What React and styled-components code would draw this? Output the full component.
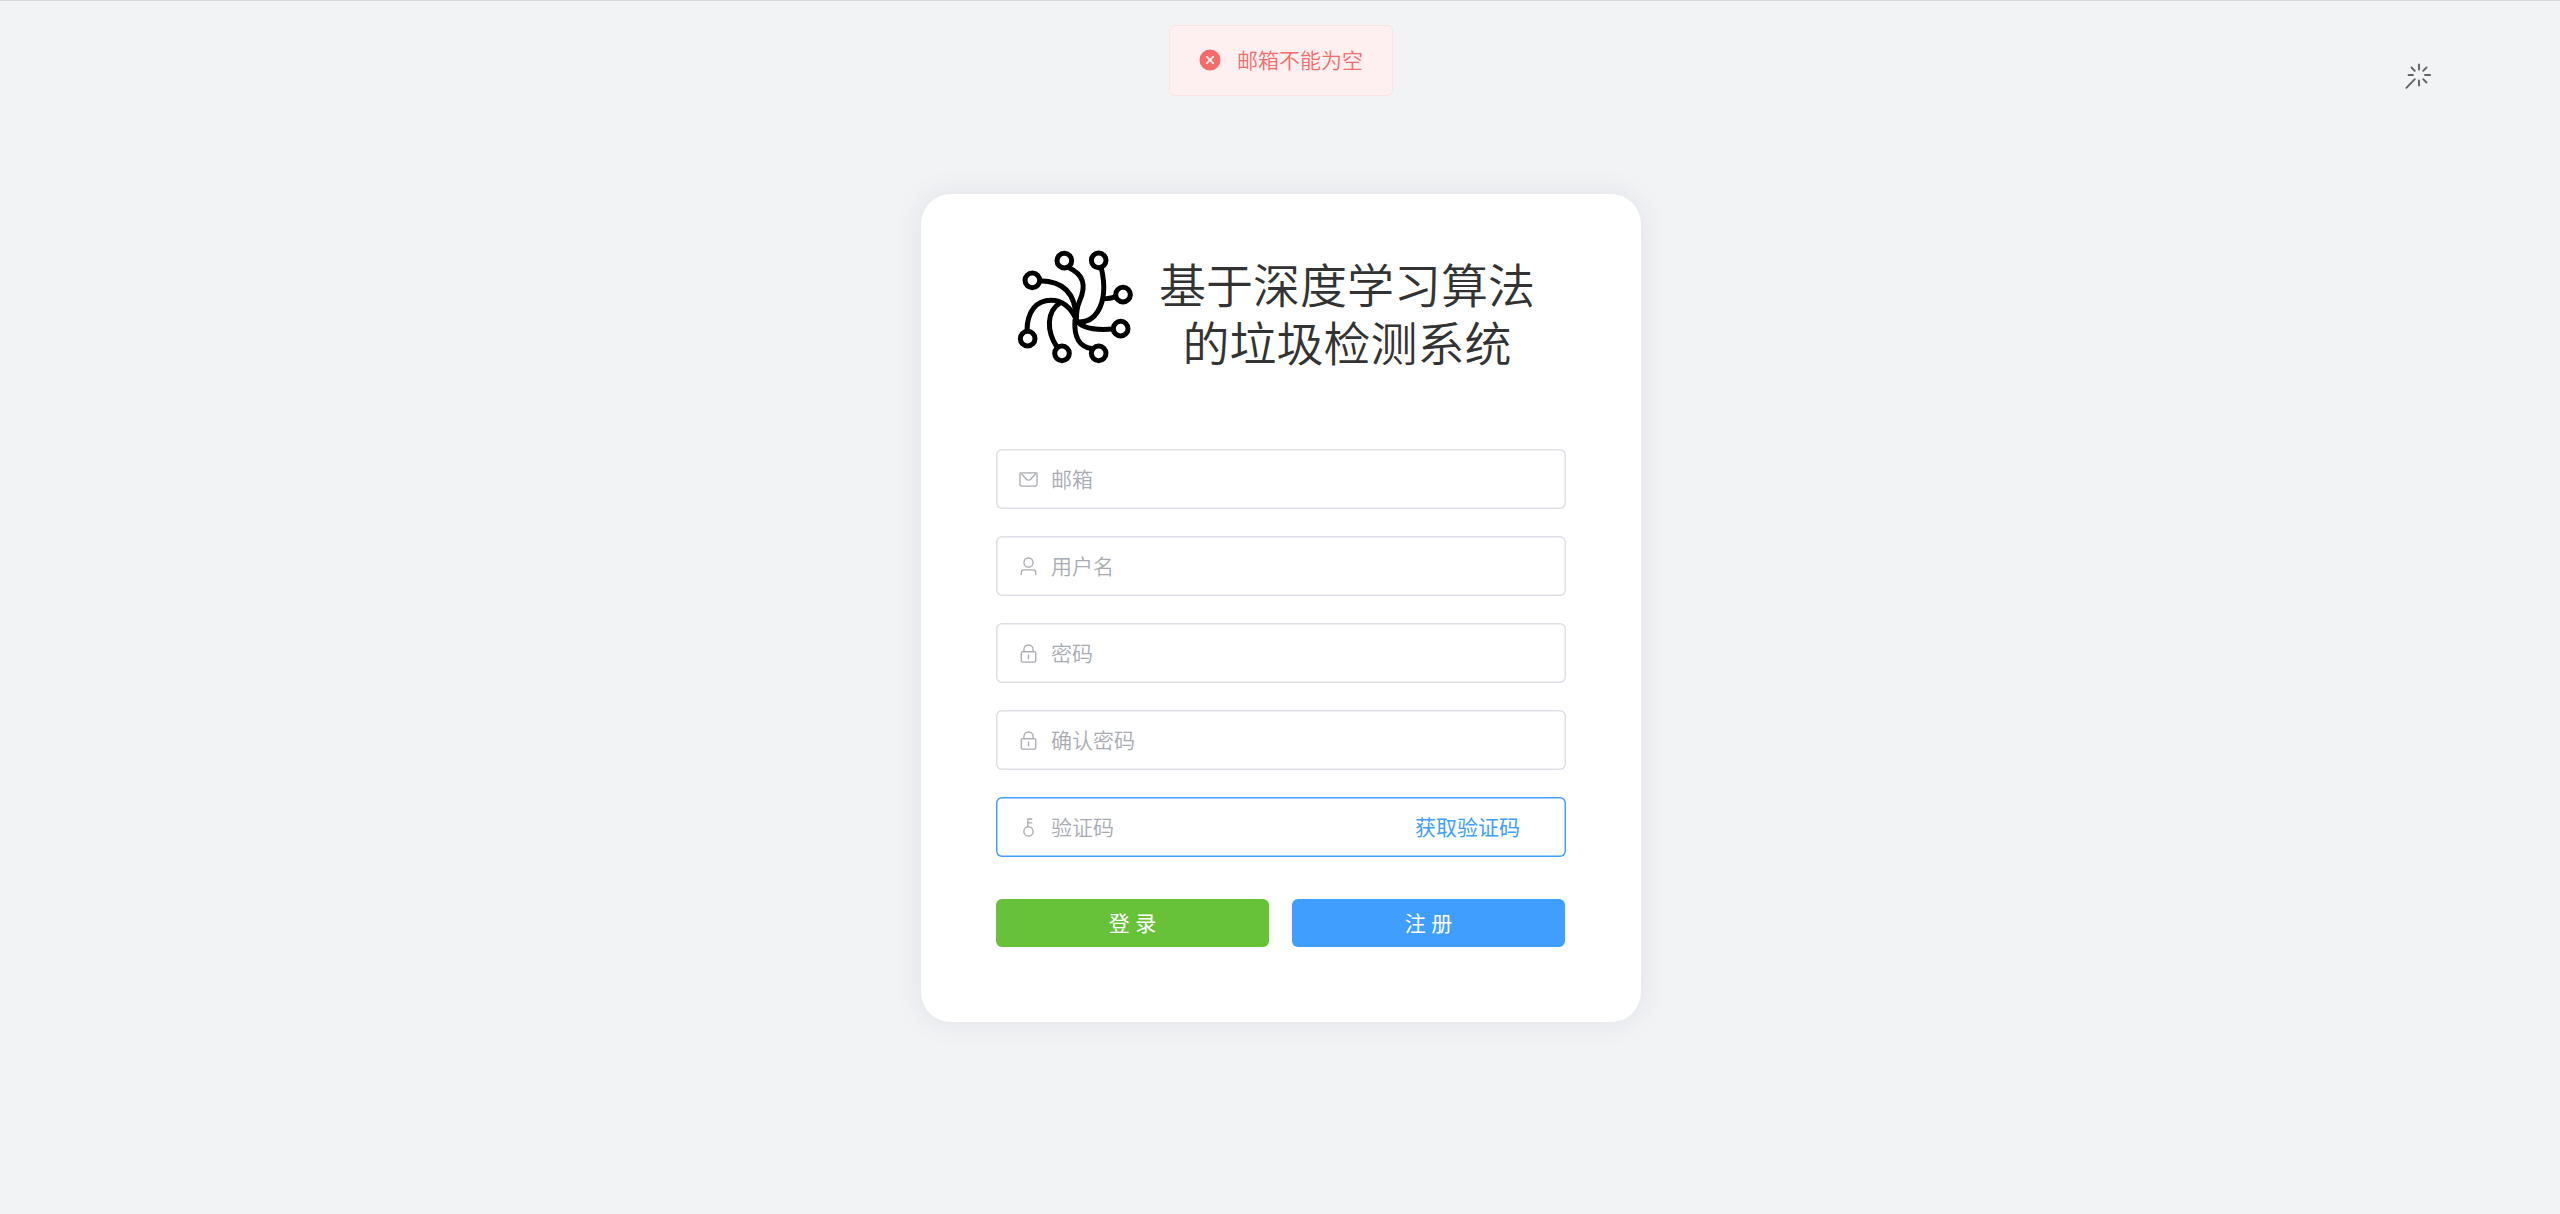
import React from "react";
import styled, { createGlobalStyle } from "styled-components";

const GlobalStyle = createGlobalStyle`
  * { box-sizing: border-box; }
  body {
    margin: 0;
    background: #f1f3f5;
    font-family: "Noto Sans CJK SC", "Liberation Sans", sans-serif;
    font-weight: 400;
  }
`;

const Page = styled.main`
  position: relative;
  display: flex;
  flex-direction: column;
  align-items: center;
  height: 1214px;
  padding: 193px 0 0 2px;
  border-top: 1px solid #d8dade;
  overflow: hidden;
`;

const Toast = styled.div`
  position: absolute;
  top: 24px;
  left: 1169px;
  width: 224px;
  height: 71px;
  padding: 0 0 1px 28px;
  display: flex;
  align-items: center;
  gap: 15px;
  border: 1px solid #fde2e2;
  border-radius: 6px;
  background: #fef0f0;
  color: #f56c6c;
  font-size: 21px;
  line-height: 21px;
`;

const ToastText = styled.span`
  padding-bottom: 1px;
  font-weight: 350;
`;

const Spinner = styled.svg`
  position: absolute;
  top: 59px;
  left: 2404px;
  width: 30px;
  height: 30px;
  fill: none;
  stroke: #606266;
  stroke-width: 1.9;
  stroke-linecap: round;
`;

const Card = styled.section`
  width: 720px;
  height: 828px;
  padding: 50px 75px 0;
  display: flex;
  flex-direction: column;
  border-radius: 30px;
  background: #fff;
  box-shadow: 0 0 30px rgba(0, 21, 81, 0.08);
`;

const Brand = styled.header`
  height: 205px;
  display: flex;
  align-items: flex-start;
  padding-left: 16px;
`;

const Logo = styled.svg`
  width: 124px;
  height: 124px;
  flex: none;
  fill: none;
  stroke: #000;
  stroke-width: 15;
`;

const Title = styled.h1`
  margin: 14px 0 0 21px;
  width: 380px;
  font-family: "Liberation Sans", "Noto Sans CJK SC", sans-serif;
  font-size: 47px;
  line-height: 58px;
  font-weight: 350;
  text-align: center;
  white-space: nowrap;
  color: #333;
`;

const TitleLine = styled.span`
  display: block;
`;

const Form = styled.form`
  display: flex;
  flex-direction: column;
  gap: 27px;
`;

const Field = styled.div`
  height: 60px;
  padding: 0 45px 0 22px;
  display: flex;
  align-items: center;
  border-radius: 6px;
  background: #fff;
  box-shadow: inset 0 0 0 1.5px ${(p) => (p.$active ? "#409eff" : "#dcdfe6")};
  color: #a8abb2;
`;

const Input = styled.input`
  flex: 1;
  min-width: 0;
  height: 40px;
  margin-left: 12px;
  padding: 0 0 2px;
  border: 0;
  outline: 0;
  background: transparent;
  font: inherit;
  font-size: 21px;
  font-weight: 350;
  &::placeholder { color: #a8abb2; opacity: 1; }
`;

const CodeLink = styled.button`
  padding: 0 1px 2px 0;
  border: 0;
  background: none;
  font: inherit;
  font-size: 21px;
  line-height: 30px;
  color: #409eff;
`;

const Actions = styled.div`
  display: flex;
  gap: 23px;
  margin-top: 15px;
`;

const Button = styled.button`
  width: 273px;
  height: 48px;
  padding: 0 0 2px;
  border: 0;
  border-radius: 6px;
  background: ${(p) => p.$color};
  color: #fff;
  font: inherit;
  font-size: 21px;
  line-height: 46px;
  word-spacing: 1px;
`;

const Glyph = styled.svg`
  width: ${(p) => p.$size}px;
  height: ${(p) => p.$size}px;
  flex: none;
  fill: currentColor;
`;

const icons = {
  mail: [
    "M128 224v512a64 64 0 0 0 64 64h640a64 64 0 0 0 64-64V224H128zm0-64h768a64 64 0 0 1 64 64v512a128 128 0 0 1-128 128H192A128 128 0 0 1 64 736V224a64 64 0 0 1 64-64z",
    "M904 224 656.512 506.88a192 192 0 0 1-289.024 0L120 224h784zm-698.944 0 210.56 240.704a128 128 0 0 0 192.704 0L818.944 224H205.056z",
  ],
  user: [
    "M512 512a192 192 0 1 0 0-384 192 192 0 0 0 0 384zm0 64a256 256 0 1 1 0-512 256 256 0 0 1 0 512zm320 320v-96a96 96 0 0 0-96-96H288a96 96 0 0 0-96 96v96a32 32 0 1 1-64 0v-96a160 160 0 0 1 160-160h448a160 160 0 0 1 160 160v96a32 32 0 1 1-64 0z",
  ],
  lock: [
    "M224 448a32 32 0 0 0-32 32v384a32 32 0 0 0 32 32h576a32 32 0 0 0 32-32V480a32 32 0 0 0-32-32H224zm0-64h576a96 96 0 0 1 96 96v384a96 96 0 0 1-96 96H224a96 96 0 0 1-96-96V480a96 96 0 0 1 96-96z",
    "M512 544a32 32 0 0 1 32 32v192a32 32 0 1 1-64 0V576a32 32 0 0 1 32-32zm192-160v-64a192 192 0 1 0-384 0v64h384zM512 64a256 256 0 0 1 256 256v128H256V320A256 256 0 0 1 512 64z",
  ],
  key: [
    "M448 456.064V96a32 32 0 0 1 32-32.064L672 64a32 32 0 0 1 0 64H512v128h160a32 32 0 0 1 0 64H512v128a256 256 0 1 1-64 8.064zM512 896a192 192 0 1 0 0-384 192 192 0 0 0 0 384z",
  ],
  error: [
    "M512 64a448 448 0 1 1 0 896 448 448 0 0 1 0-896zm0 393.664L407.936 353.6a38.4 38.4 0 1 0-54.336 54.336L457.664 512 353.6 616.064a38.4 38.4 0 1 0 54.336 54.336L512 566.336 616.064 670.4a38.4 38.4 0 1 0 54.336-54.336L566.336 512 670.4 407.936a38.4 38.4 0 1 0-54.336-54.336L512 457.664z",
  ],
};

function Icon({ name, size = 21 }) {
  return (
    <Glyph $size={size} viewBox="0 0 1024 1024">
      {icons[name].map((d) => (
        <path key={d} d={d} />
      ))}
    </Glyph>
  );
}

const nodes = [
  [193, 92], [296, 91], [97, 151], [369, 194],
  [362, 296], [83, 326], [186, 370], [296, 370],
];

function BrandLogo() {
  return (
    <Logo viewBox="36 42 372 372">
      <path d="M120 152C187 153 226 186 228 262" />
      <path d="M207 113C252 134 259 167 239 212C231 231 229 247 229 268" />
      <path d="M304 114C316 166 314 211 293 245C278 270 254 278 229 275" />
      <path d="M308 206C322 206 334 205 345 200" />
      <path d="M81 303C81 243 110 211 153 211C190 211 212 232 229 269C241 293 276 302 339 297" />
      <path d="M181 218C139 244 139 303 171 351" />
      <path d="M225 268C221 324 238 350 276 356" />
      {nodes.map(([x, y]) => (
        <circle key={`${x}-${y}`} cx={x} cy={y} r="22" />
      ))}
    </Logo>
  );
}

const fields = [
  { icon: "mail", label: "邮箱" },
  { icon: "user", label: "用户名" },
  { icon: "lock", label: "密码" },
  { icon: "lock", label: "确认密码" },
  { icon: "key", label: "验证码", action: "获取验证码" },
];

export default function App() {
  return (
    <>
      <GlobalStyle />
      <Page>
        <Toast role="alert">
          <Icon name="error" size={24} />
          <ToastText>邮箱不能为空</ToastText>
        </Toast>
        <Spinner viewBox="0 0 30 30">
          <path d="M15 4.5v5M15 20.5v5M4.5 15h4.5M21 15h5M7.5 7.5l3.3 3.3M22.5 7.5l-3.3 3.3M19.2 19.2l3.3 3.3M10.8 19.2l-8.4 8.6" />
        </Spinner>
        <Card>
          <Brand>
            <BrandLogo />
            <Title>
              <TitleLine>基于深度学习算法</TitleLine>
              <TitleLine>的垃圾检测系统</TitleLine>
            </Title>
          </Brand>
          <Form>
            {fields.map(({ icon, label, action }) => (
              <Field key={label} $active={Boolean(action)}>
                <Icon name={icon} />
                <Input placeholder={label} />
                {action && <CodeLink type="button">{action}</CodeLink>}
              </Field>
            ))}
            <Actions>
              <Button type="button" $color="#67c23a">登 录</Button>
              <Button type="button" $color="#409eff">注 册</Button>
            </Actions>
          </Form>
        </Card>
      </Page>
    </>
  );
}
